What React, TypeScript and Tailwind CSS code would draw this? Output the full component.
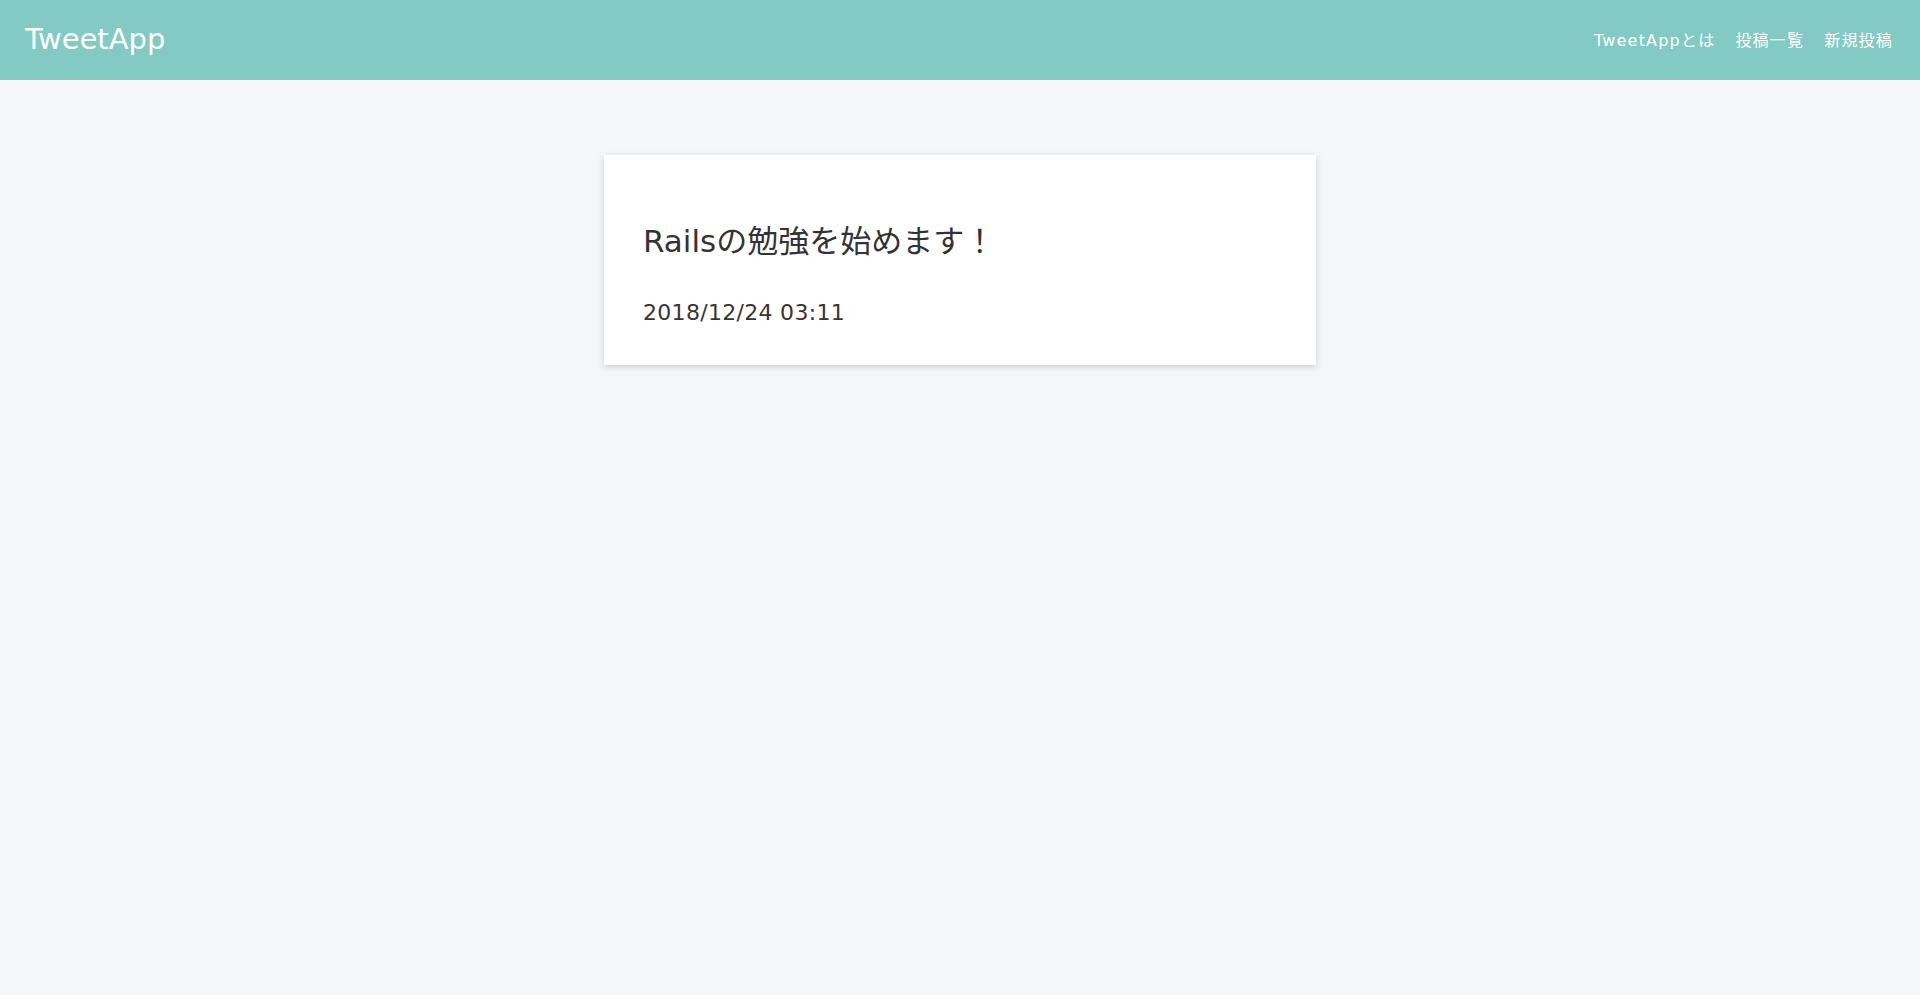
export default function App() {
  return (
    <div className="min-h-[995px] bg-[#f5f6f8] font-['DejaVu_Sans','Noto_Sans_CJK_JP',sans-serif]">
      <header className="flex h-20 items-center justify-between bg-[#82cac3] pl-[25px] pr-[27px]">
        <a href="#" className="pb-[2px] text-[29px] leading-none text-white">
          TweetApp
        </a>
        <nav className="flex items-center gap-[20px] pt-[2px] text-[16px] tracking-[1.2px] text-white">
          <a href="#">TweetAppとは</a>
          <a href="#">投稿一覧</a>
          <a href="#">新規投稿</a>
        </nav>
      </header>
      <main className="flex justify-center pt-[75px]">
        <div className="h-[210px] w-[712px] bg-white px-[39px] pt-[64px] shadow-[0_2px_6px_rgba(150,162,178,0.45)]">
          <h1 className="text-[31px] leading-[45px] text-[#333]">
            Railsの勉強を始めます！
          </h1>
          <p className="mt-[34px] text-[22px] leading-[30px] tracking-[0.3px] text-[#3a3430]">
            2018/12/24 03:11
          </p>
        </div>
      </main>
    </div>
  );
}
